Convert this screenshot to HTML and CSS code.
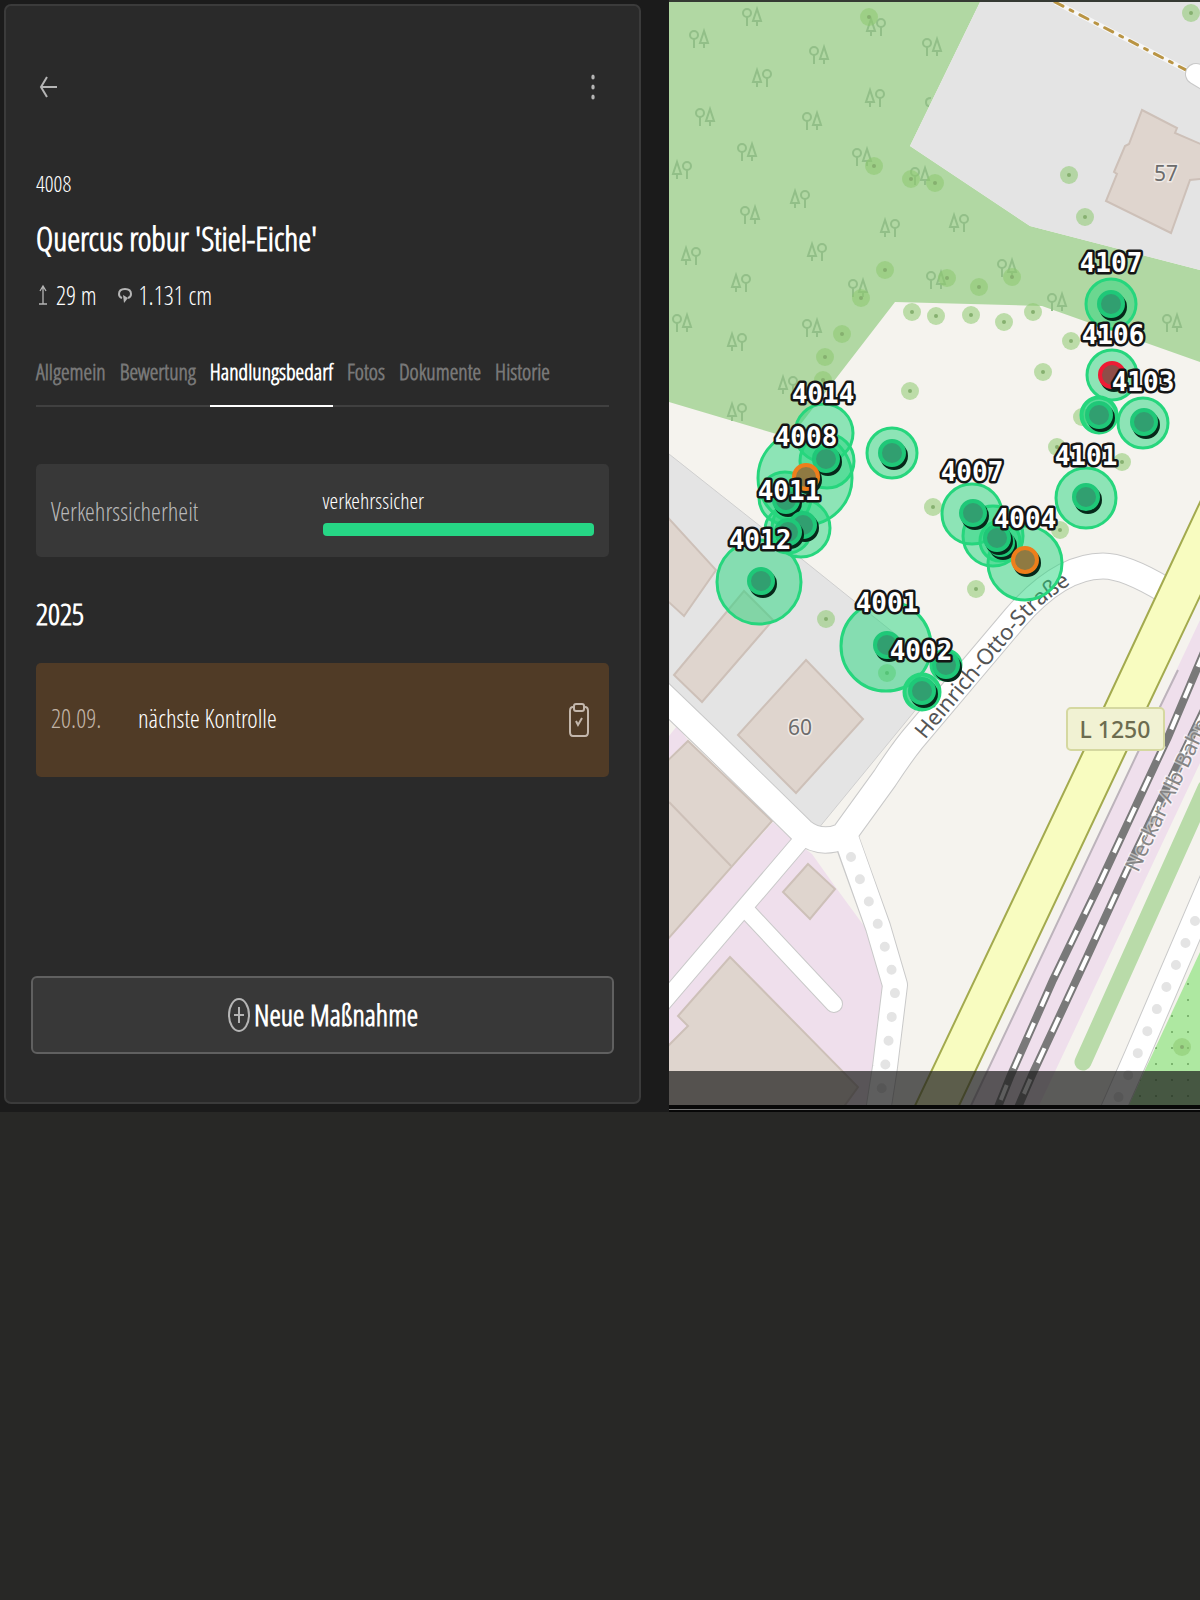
FILE: index.html
```html
<!DOCTYPE html>
<html lang="de">
<head>
<meta charset="utf-8">
<meta name="viewport" content="width=device-width, initial-scale=1">
<title>Baum 4008</title>
<link rel="stylesheet" href="styles.css">
</head>
<body>
<main class="app">
  <div class="side">
    <section class="panel">
      <header class="toolbar">
        <button class="icon-button" type="button" aria-label="Zurück">
          <svg width="20" height="24" viewBox="0 0 20 24"><path d="M9 2L3 12L9 22M3 12H19" fill="none" stroke="currentColor" stroke-width="2"/></svg>
        </button>
        <button class="icon-button" type="button" aria-label="Menü">
          <svg width="8" height="28" viewBox="0 0 8 28" fill="currentColor"><ellipse cx="4" cy="4" rx="1.7" ry="2.5"/><ellipse cx="4" cy="14" rx="1.7" ry="2.5"/><ellipse cx="4" cy="24" rx="1.7" ry="2.5"/></svg>
        </button>
      </header>
      <p class="tree-id">4008</p>
      <h1 class="title">Quercus robur 'Stiel-Eiche'</h1>
      <div class="facts">
        <span class="fact">
          <svg width="14" height="24" viewBox="0 0 14 24"><path d="M7 21V3M4 8L7 3L10 8M3 21H11" fill="none" stroke="currentColor" stroke-width="1.3"/></svg>
          29 m
        </span>
        <span class="fact">
          <svg width="16" height="24" viewBox="0 0 16 24"><path d="M5 15Q2 14 2 11Q2 6 8 6Q14 6 14 11Q14 14 11 15" fill="none" stroke="currentColor" stroke-width="2"/><path d="M6 12L11 15L7 20Z" fill="currentColor"/></svg>
          1.131 cm
        </span>
      </div>
      <div class="tabs" role="tablist">
        <button class="tab" type="button" role="tab">Allgemein</button>
        <button class="tab" type="button" role="tab">Bewertung</button>
        <button class="tab active" type="button" role="tab" aria-selected="true">Handlungsbedarf</button>
        <button class="tab" type="button" role="tab">Fotos</button>
        <button class="tab" type="button" role="tab">Dokumente</button>
        <button class="tab" type="button" role="tab">Historie</button>
      </div>
      <div class="card safety">
        <span class="muted">Verkehrssicherheit</span>
        <div class="rating"><span>verkehrssicher</span><div class="bar"></div></div>
      </div>
      <h2 class="year">2025</h2>
      <div class="card task">
        <span class="date">20.09.</span>
        <span class="task-name">nächste Kontrolle</span>
        <svg class="clip" width="24" height="36" viewBox="0 0 24 36"><g fill="none" stroke="currentColor" stroke-width="2"><path d="M7 5H6Q3 5 3 9V30Q3 34 6 34H18Q21 34 21 30V9Q21 5 18 5H17"/><rect x="7" y="2" width="10" height="7" rx="2"/><path d="M9 19L11 23L15 16"/></g></svg>
      </div>
      <button class="add" type="button">
        <svg width="24" height="36" viewBox="0 0 24 36"><g fill="none" stroke="currentColor" stroke-width="2"><ellipse cx="12" cy="18" rx="10" ry="16"/><path d="M12 10V26M7 18H17"/></g></svg>
        Neue Maßnahme
      </button>
    </section>
  </div>
  <svg class="map" viewBox="669 0 531 1112" role="img" aria-label="Karte">
    <defs>
      <g id="trees-a" class="trees"><circle cx="-5" cy="-4" r="4"/><path d="M-5 0V9M5 5V9M5 -8L1 4H9Z"/></g>
      <g id="trees-b" class="trees"><circle cx="5" cy="-4" r="4"/><path d="M5 0V9M-5 5V9M-5 -8L-9 4H-1Z"/></g>
      <g id="tree"><circle r="9" class="crown"/><circle r="2" class="trunk"/></g>
      <g id="pin"><circle cx="2" cy="3" r="14" fill="#06281a"/><circle r="12" class="pin-dot"/></g>
      <pattern id="scrub" width="16" height="16" patternUnits="userSpaceOnUse" x="1" y="5"><circle cx="3" cy="3" r="1" fill="#6ba45f"/></pattern>
    </defs>
    <rect x="669" width="531" height="1112" fill="#f5f3ee"/>
    <path d="M669 0H981L910 146L1030 226L1200 270V362L1042 306L895 302L790 438L669 402Z" fill="#b1d8a3"/>
    <path d="M981 0H1200V270L1030 226L910 146Z" fill="#e4e4e4"/>
    <path d="M669 454L803 560L945 674L818 829L669 690Z" fill="#e4e4e4" stroke="#cfcfcf"/>
    <g>
      <use href="#trees-a" x="752" y="17"/><use href="#trees-b" x="876" y="27"/><use href="#trees-a" x="699" y="39"/><use href="#trees-a" x="819" y="55"/><use href="#trees-b" x="762" y="78"/><use href="#trees-b" x="875" y="98"/><use href="#trees-a" x="705" y="117"/><use href="#trees-a" x="812" y="121"/><use href="#trees-a" x="747" y="152"/><use href="#trees-a" x="862" y="157"/><use href="#trees-b" x="682" y="170"/><use href="#trees-a" x="920" y="176"/><use href="#trees-b" x="800" y="199"/><use href="#trees-a" x="750" y="215"/><use href="#trees-b" x="890" y="228"/><use href="#trees-b" x="691" y="256"/><use href="#trees-b" x="817" y="252"/><use href="#trees-b" x="741" y="283"/><use href="#trees-a" x="858" y="288"/><use href="#trees-a" x="682" y="323"/><use href="#trees-b" x="737" y="342"/><use href="#trees-a" x="812" y="328"/><use href="#trees-b" x="788" y="385"/><use href="#trees-b" x="737" y="412"/><use href="#trees-a" x="932" y="47"/><use href="#trees-b" x="959" y="223"/><use href="#trees-a" x="1007" y="268"/><use href="#trees-a" x="936" y="280"/><use href="#trees-a" x="1057" y="302"/><use href="#trees-a" x="1172" y="323"/>
      <path class="trees" d="M931 98Q926 98 926 102Q926 106 929 106"/>
    </g>
    <path d="M669 758L688 740L677 726L669 736ZM773 822L793 840L812 854L834 885L867 930L883 987L873 1070L868 1112H669V938Z" fill="#efdfec"/>
    <g fill="#dfd5ce" stroke="#cdc0b8" stroke-width="2">
      <path d="M660 768L688 741L772 821L660 948Z"/><path d="M669 802L731 866"/>
      <path d="M808 864L835 889L810 919L783 892Z"/>
      <path d="M730 957L858 1087L840 1112H660V1054L688 1026L678 1016Z"/>
      <path d="M806 660L863 719L796 793L738 735Z"/>
      <path d="M744 591L773 620L702 702L674 675Z"/>
      <path d="M660 509L716 570L684 616L660 594Z"/>
      <path d="M1142 110L1177 128L1175 133L1210 148V178L1190 180L1171 233L1106 201L1117 174L1114 172L1125 146L1129 144Z"/>
    </g>
    <path d="M1055 2L1188 71" stroke="#fff" stroke-width="5" opacity=".7"/>
    <path d="M1055 2L1188 71" stroke="#b99443" stroke-width="3" stroke-dasharray="9 8 3 8" stroke-linecap="round"/>
    <g fill="none" stroke-linejoin="round">
      <g stroke="#c9c9c9">
        <path d="M655 688L709 740L802 831Q820 846 843 836L885 778Q900 755 912 740L1015 618Q1060 566 1103 566Q1125 566 1165 590" stroke-width="27"/>
        <path d="M800 842L655 1012M748 912L834 1004" stroke-width="18" stroke-linecap="round"/>
        <path d="M846 838L878 927L895 985L885 1067L878 1112M1212 880L1137 1055L1112 1112" stroke-width="26"/>
        <path d="M1196 74L1216 86" stroke-width="22" stroke-linecap="round"/>
      </g>
      <g stroke="#fff">
        <path d="M655 688L709 740L802 831Q820 846 843 836L885 778Q900 755 912 740L1015 618Q1060 566 1103 566Q1125 566 1165 590" stroke-width="25"/>
        <path d="M800 842L655 1012M748 912L834 1004" stroke-width="16" stroke-linecap="round"/>
        <path d="M845 834L878 927L895 985L885 1067L878 1112M1212 880L1137 1055L1112 1112" stroke-width="24"/>
        <path d="M1196 74L1216 86" stroke-width="20" stroke-linecap="round"/>
      </g>
      <path d="M851 857L879 927L896 985L885 1067L878 1112M1195 921L1137 1055L1112 1112" stroke="#e4e4e4" stroke-width="10" stroke-linecap="round" stroke-dasharray="0 24"/>
    </g>
    <path d="M1200 620L1138 752L968 1112H1036L1200 763Z" fill="#efdfec"/>
    <path d="M1178 670L1138 752L968 1112" fill="none" stroke="#bcb3bb" stroke-width="2"/>
    <path d="M1202 498L1165 577L1083 752L912 1112H956L1126 752L1202 592Z" fill="#f8fcc0" stroke="#a3aa4e" stroke-width="2"/>
    <g fill="none">
      <path d="M1204 652L1168 737L1098 887L1053 980L1010 1077L996 1112M1204 710L1127 870L1087 957L1033 1073L1016 1112" stroke="#797979" stroke-width="8"/>
      <path d="M1204 652L1168 737L1098 887L1053 980L1010 1077L996 1112M1204 710L1127 870L1087 957L1033 1073L1016 1112" stroke="#fff" stroke-width="4" stroke-dasharray="16 18"/>
      <path d="M1083 1062L1206 788" stroke="#b9dba9" stroke-width="17" stroke-linecap="round"/>
    </g>
    <path d="M1200 952L1145 1070L1126 1112H1200Z" fill="#aee8a1"/>
    <path d="M1200 952L1145 1070L1126 1112H1200Z" fill="url(#scrub)"/>
    <g>
      <use href="#tree" x="869" y="17"/><use href="#tree" x="874" y="166"/><use href="#tree" x="911" y="179"/><use href="#tree" x="935" y="183"/><use href="#tree" x="885" y="270"/><use href="#tree" x="861" y="298"/><use href="#tree" x="842" y="334"/><use href="#tree" x="825" y="357"/><use href="#tree" x="823" y="380"/><use href="#tree" x="912" y="312"/><use href="#tree" x="936" y="316"/><use href="#tree" x="910" y="391"/><use href="#tree" x="1191" y="13"/><use href="#tree" x="1069" y="175"/><use href="#tree" x="1085" y="217"/><use href="#tree" x="947" y="278"/><use href="#tree" x="979" y="287"/><use href="#tree" x="1012" y="277"/><use href="#tree" x="971" y="315"/><use href="#tree" x="1004" y="322"/><use href="#tree" x="1033" y="312"/><use href="#tree" x="1071" y="341"/><use href="#tree" x="1043" y="372"/><use href="#tree" x="933" y="507"/><use href="#tree" x="826" y="619"/><use href="#tree" x="887" y="673"/><use href="#tree" x="1057" y="447"/><use href="#tree" x="1122" y="462"/><use href="#tree" x="1060" y="530"/><use href="#tree" x="976" y="589"/><use href="#tree" x="1082" y="417"/><use href="#tree" x="1182" y="1047"/>
    </g>
    <rect x="1067" y="708" width="97" height="42" rx="4" fill="#f1f2d3" stroke="#d5d8a0" stroke-width="2"/>
    <path id="street" d="M925 740L1022 625Q1040 603 1074 582" fill="none"/>
    <path id="rail" d="M1138 873L1230 680" fill="none"/>
    <g class="map-text">
      <text x="1166" y="181" class="mid">57</text>
      <text x="800" y="735" class="mid">60</text>
      <text x="1115" y="738" class="mid road-no">L 1250</text>
      <text class="street"><textPath href="#street">Heinrich-Otto-Straße</textPath></text>
      <text class="rail"><textPath href="#rail">Neckar-Alb-Bahn</textPath></text>
    </g>
    <g class="zones">
      <circle cx="1111" cy="304" r="25"/><circle cx="1112" cy="375" r="25"/><circle cx="1143" cy="423" r="25"/><circle cx="1099" cy="415" r="18"/><circle cx="1099" cy="415" r="17"/><circle cx="1086" cy="498" r="30"/><circle cx="972" cy="514" r="30"/><circle cx="993" cy="536" r="30"/><circle cx="1000" cy="541" r="20"/><circle cx="1025" cy="563" r="37"/><circle cx="886" cy="646" r="45"/><circle cx="922" cy="692" r="18"/><circle cx="922" cy="692" r="17"/><circle cx="946" cy="665" r="15"/><circle cx="759" cy="582" r="42"/><circle cx="892" cy="453" r="25"/><circle cx="824" cy="433" r="29"/><circle cx="805" cy="478" r="47"/><circle cx="827" cy="461" r="27"/><circle cx="785" cy="498" r="26"/><circle cx="801" cy="528" r="29"/><circle cx="788" cy="530" r="23"/>
    </g>
    <g>
      <use href="#pin" x="1111" y="304"/><use href="#pin" x="1112" y="375" class="red"/><use href="#pin" x="1144" y="422"/><use href="#pin" x="1099" y="415"/><use href="#pin" x="1086" y="497"/><use href="#pin" x="973" y="513"/><use href="#pin" x="1001" y="543"/><use href="#pin" x="997" y="538"/><use href="#pin" x="1025" y="560" class="orange"/><use href="#pin" x="946" y="665"/><use href="#pin" x="922" y="691"/><use href="#pin" x="887" y="645"/><use href="#pin" x="761" y="581"/><use href="#pin" x="892" y="453"/><use href="#pin" x="826" y="459"/><use href="#pin" x="806" y="477" class="orange"/><use href="#pin" x="786" y="500"/><use href="#pin" x="803" y="525"/><use href="#pin" x="788" y="532"/>
    </g>
    <g class="labels">
      <text x="1111" y="272">4107</text><text x="1113" y="344">4106</text><text x="1143" y="391">4103</text><text x="1086" y="465">4101</text><text x="972" y="481">4007</text><text x="1025" y="528">4004</text><text x="823" y="403">4014</text><text x="806" y="446">4008</text><text x="789" y="500">4011</text><text x="760" y="549">4012</text><text x="887" y="612">4001</text><text x="921" y="660">4002</text>
    </g>
    <rect x="669" y="1071" width="531" height="34" fill="#1a1a1a" opacity=".7"/>
    <rect x="669" y="1105" width="531" height="7" fill="#080808"/>
    <rect x="669" y="1109" width="531" height="1" fill="#777"/>
    <rect x="669" width="531" height="2" fill="#353a33"/>
  </svg>
</main>
</body>
</html>
```
FILE: styles.css
```css
* { box-sizing: border-box; }
body { margin: 0; background: #282826; color: #fff; font-family: "Open Sans Condensed Light", "Roboto Condensed", "Open Sans", sans-serif; font-size: 22px; line-height: 28px; }
h1, h2, p { margin: 0; }
svg { display: block; flex: none; }
button { font: inherit; color: inherit; border: 0; background: none; padding: 0; cursor: pointer; }
.app { display: grid; grid-template-columns: minmax(0, 669fr) minmax(0, 531fr); }
.side { display: flex; background: #1b1b1b; padding: 4px 28px 8px 4px; }
.panel { flex: 1; min-width: 0; display: flex; flex-direction: column; background: #2a2a2a; border: 2px solid #3b3b3b; border-radius: 7px; padding: 66px 30px 48px; }
.toolbar { display: flex; justify-content: space-between; align-items: center; padding: 0 12px 0 2px; height: 30px; color: #b5b5b5; }
.tree-id { margin-top: 67px; }
.title { margin-top: 24px; font-size: 33px; line-height: 36px; font-weight: 700; }
.facts { display: flex; gap: 20px; margin-top: 24px; font-size: 25px; line-height: 28px; }
.fact { display: flex; align-items: center; gap: 6px; }
.fact svg { color: #b5b5b5; }
.tabs { display: flex; gap: 14px; margin-top: 48px; border-bottom: 2px solid #404040; }
.tab { color: #777; font-weight: 700; padding-bottom: 20px; margin-bottom: -2px; border-bottom: 2px solid transparent; white-space: nowrap; }
.tab.active { color: #fff; border-color: #fff; }
.card { display: flex; align-items: center; border-radius: 5px; padding: 0 15px; font-size: 25px; }
.safety { margin-top: 57px; height: 93px; background: #383838; }
.muted { flex: 1; color: #b8b8b8; }
.rating { flex: 1; font-size: 22px; }
.bar { height: 13px; margin-top: 9px; border-radius: 4px; background: #26d685; }
.year { margin-top: 39px; font-size: 30px; line-height: 36px; }
.task { margin-top: 31px; height: 114px; background: #503b26; }
.date { width: 87px; color: #c0b3a6; }
.date, .task-name { padding-bottom: 4px; }
.task-name { flex: 1; }
.clip { color: #c3b7ac; margin-right: 3px; }
.add { display: flex; align-items: center; justify-content: center; gap: 3px; margin: auto -5px 0; height: 78px; background: #383838; border: 2px solid #606060; border-radius: 6px; font-size: 29px; font-weight: 700; }
.add svg { color: #b5b5b5; }
.map { width: 100%; height: auto; }
.trees { fill: none; stroke: #92bf88; stroke-width: 2; }
.crown { fill: #8cc870; opacity: .55; }
.trunk { fill: #86b070; }
.zones { fill: #26d67d; fill-opacity: .5; stroke: #26d67d; stroke-width: 3; }
.red { --ring: #ee1c35; --core: #8f4d48; }
.orange { --ring: #ee7e1b; --core: #8f7a42; }
.pin-dot { fill: var(--core, #319f70); stroke: var(--ring, #1fc878); stroke-width: 4; }
.map-text { font-family: "Noto Sans", sans-serif; font-size: 21px; fill: #6c6c6c; stroke: #fff; stroke-opacity: .5; stroke-width: 3px; paint-order: stroke; }
.mid { text-anchor: middle; }
.road-no { font-size: 23px; fill: #6c6c50; stroke: none; font-weight: 500; }
.street { fill: #555; font-size: 22px; }
.rail { fill: #858585; }
.labels { font-family: "DejaVu Sans Mono", monospace; font-weight: 700; font-size: 26px; text-anchor: middle; fill: #fff; stroke: #151515; stroke-width: 5px; stroke-linejoin: round; paint-order: stroke; }
```
